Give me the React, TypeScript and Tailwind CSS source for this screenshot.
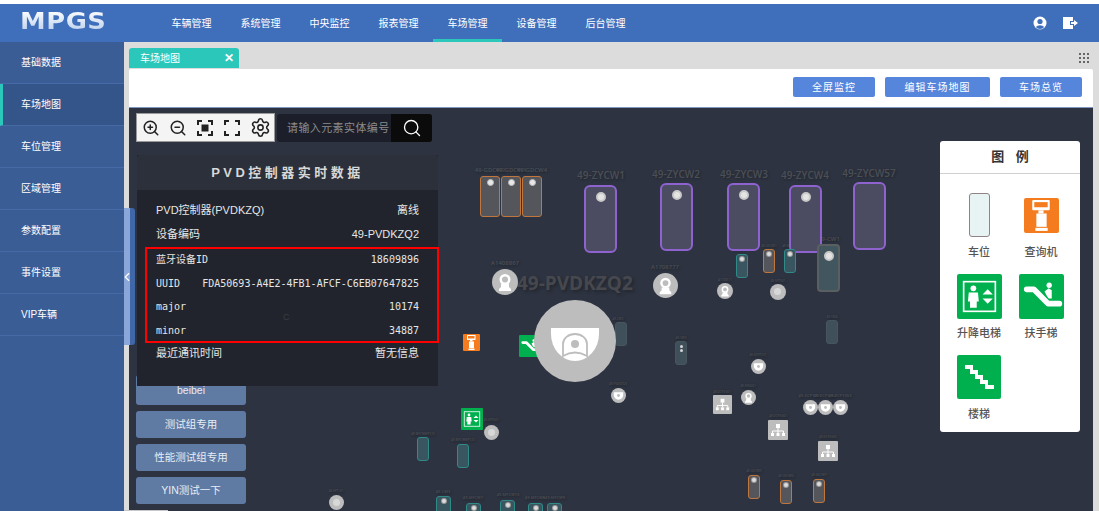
import { ChevronLeft, Search, Settings, ZoomIn, ZoomOut } from 'lucide-react';

const navItems = ['车辆管理', '系统管理', '中央监控', '报表管理', '车场管理', '设备管理', '后台管理'];
const sideItems = ['基础数据', '车场地图', '车位管理', '区域管理', '参数配置', '事件设置', 'VIP车辆'];
const groups = ['测试组专用', '性能测试组专用', 'YIN测试一下'];

// map canvas starts at page (129, 108), inside its 1px top border
const MX = 129;
const MY = 108;

type SlotKind = 'orange' | 'purple' | 'teal' | 'gray' | 'mixed';

const slotClass: Record<SlotKind, string> = {
    orange: 'border-[#c0763c] bg-[#55565c] rounded-[3px]',
    purple: 'border-2 border-[#8e63cf] bg-[#4b4c61] rounded-[6px]',
    teal: 'border-[#2f8a88] bg-[#39555f] rounded-[3px]',
    gray: 'border-[#47555f] bg-[#3f505a] rounded-[3px]',
    mixed: 'border-2 border-[#5a5f62] bg-[#42565f] rounded-[4px]',
};

const slots: { x: number; y: number; w: number; h: number; kind: SlotKind; dot?: 'big' | 'med' | 'small' | 'pair' }[] = [
    { x: 480, y: 176, w: 20, h: 41, kind: 'orange', dot: 'med' },
    { x: 501, y: 176, w: 20, h: 41, kind: 'orange', dot: 'med' },
    { x: 522, y: 176, w: 20, h: 41, kind: 'orange', dot: 'med' },
    { x: 584, y: 185, w: 33, h: 68, kind: 'purple', dot: 'big' },
    { x: 660, y: 183, w: 33, h: 68, kind: 'purple', dot: 'big' },
    { x: 727, y: 183, w: 33, h: 68, kind: 'purple', dot: 'big' },
    { x: 789, y: 185, w: 33, h: 68, kind: 'purple', dot: 'big' },
    { x: 853, y: 182, w: 33, h: 68, kind: 'purple' },
    { x: 736, y: 254, w: 12, h: 24, kind: 'teal', dot: 'small' },
    { x: 763, y: 249, w: 12, h: 24, kind: 'orange', dot: 'small' },
    { x: 784, y: 249, w: 12, h: 24, kind: 'teal', dot: 'small' },
    { x: 817, y: 244, w: 23, h: 48, kind: 'mixed', dot: 'big' },
    { x: 615, y: 322, w: 12, h: 24, kind: 'gray' },
    { x: 826, y: 320, w: 12, h: 24, kind: 'gray' },
    { x: 675, y: 341, w: 12, h: 24, kind: 'gray', dot: 'pair' },
    { x: 457, y: 444, w: 12, h: 24, kind: 'teal' },
    { x: 417, y: 437, w: 12, h: 24, kind: 'teal' },
    { x: 436, y: 496, w: 15, h: 24, kind: 'teal', dot: 'small' },
    { x: 466, y: 503, w: 15, h: 24, kind: 'teal', dot: 'small' },
    { x: 500, y: 500, w: 15, h: 24, kind: 'teal', dot: 'small' },
    { x: 528, y: 503, w: 15, h: 24, kind: 'teal', dot: 'small' },
    { x: 547, y: 503, w: 15, h: 24, kind: 'teal', dot: 'small' },
    { x: 748, y: 475, w: 12, h: 24, kind: 'orange', dot: 'small' },
    { x: 780, y: 480, w: 12, h: 24, kind: 'orange', dot: 'small' },
    { x: 813, y: 479, w: 12, h: 24, kind: 'orange', dot: 'small' },
];

const labels: { x: number; y: number; text: string; size: number }[] = [
    { x: 490, y: 170, text: '49-GDCW2', size: 6 },
    { x: 511, y: 170, text: '49-GDCW3', size: 6 },
    { x: 532, y: 170, text: '49-GDCW4', size: 6 },
    { x: 601, y: 175, text: '49-ZYCW1', size: 10 },
    { x: 676, y: 174, text: '49-ZYCW2', size: 10 },
    { x: 744, y: 174, text: '49-ZYCW3', size: 10 },
    { x: 805, y: 175, text: '49-ZYCW4', size: 10 },
    { x: 869, y: 173, text: '49-ZYCW57', size: 10 },
    { x: 505, y: 263, text: 'A1408867', size: 6 },
    { x: 665, y: 267, text: 'A1708777', size: 6 },
    { x: 829, y: 239, text: '49-CW1', size: 6 },
    { x: 742, y: 249, text: '49-GDCW1', size: 4 },
    { x: 769, y: 246, text: '49-GDCW1', size: 3 },
    { x: 790, y: 246, text: '49-MFCW2', size: 3 },
    { x: 725, y: 280, text: 'A1708111', size: 3 },
    { x: 778, y: 281, text: '49-SPT001', size: 3 },
    { x: 618, y: 319, text: '49-CW2', size: 3 },
    { x: 832, y: 317, text: '49-CW4', size: 3 },
    { x: 681, y: 338, text: '49-CW3', size: 3 },
    { x: 758, y: 355, text: '49-DCPT221', size: 3 },
    { x: 618, y: 384, text: '49-PVDKZQ3', size: 3 },
    { x: 748, y: 386, text: '49-SPG001', size: 3 },
    { x: 722, y: 392, text: '49-DCPSG01', size: 3 },
    { x: 810, y: 396, text: '49-DCPT001', size: 4 },
    { x: 825, y: 396, text: '49-DCPT002', size: 4 },
    { x: 840, y: 396, text: '49-DCPT003', size: 4 },
    { x: 778, y: 416, text: '49-DCPSG02', size: 3 },
    { x: 828, y: 437, text: '49-DCPSG03', size: 3 },
    { x: 491, y: 420, text: '49-SPT002', size: 3 },
    { x: 463, y: 440, text: '49-MFCWWP122', size: 3 },
    { x: 423, y: 434, text: '49-MFCWWP122', size: 3 },
    { x: 754, y: 471, text: '49-GDCW5', size: 3 },
    { x: 786, y: 476, text: '49-GDCW6', size: 3 },
    { x: 819, y: 475, text: '49-GDCW7', size: 3 },
    { x: 443, y: 492, text: '49-CW3', size: 4 },
    { x: 473, y: 498, text: '49-MFCW7', size: 4 },
    { x: 508, y: 495, text: '49-MFCW13', size: 4 },
    { x: 535, y: 498, text: '49-MFCW8', size: 4 },
    { x: 555, y: 498, text: '49-MFCW9', size: 4 },
    { x: 336, y: 491, text: '49-SPT101', size: 3 },
];

const circles: { x: number; y: number; r: number; icon: 'cam' | 'dome' | 'none' }[] = [
    { x: 505, y: 282, r: 13, icon: 'cam' },
    { x: 665, y: 285, r: 12.5, icon: 'cam' },
    { x: 725, y: 291, r: 8, icon: 'cam' },
    { x: 778, y: 292, r: 8, icon: 'none' },
    { x: 618, y: 395, r: 7.5, icon: 'dome' },
    { x: 758, y: 366, r: 7.5, icon: 'dome' },
    { x: 748, y: 397, r: 7.5, icon: 'cam' },
    { x: 810, y: 407, r: 7.5, icon: 'dome' },
    { x: 825, y: 407, r: 7.5, icon: 'dome' },
    { x: 840, y: 407, r: 7.5, icon: 'dome' },
    { x: 491, y: 432, r: 7.5, icon: 'none' },
    { x: 336, y: 502, r: 7.5, icon: 'none' },
];

const networks = [
    { x: 713, y: 395, s: 19 },
    { x: 768, y: 420, s: 20 },
    { x: 818, y: 441, s: 20 },
];

const rows = [
    { name: '蓝牙设备ID', value: '18609896' },
    { name: 'UUID', value: 'FDA50693-A4E2-4FB1-AFCF-C6EB07647825' },
    { name: 'major', value: '10174' },
    { name: 'minor', value: '34887' },
];

function KioskIcon({ size }: { size: number }) {
    return (
        <svg width={size} height={size} viewBox="0 0 34 34">
            <rect width="34" height="34" rx="2" fill="#f47b1e" />
            <rect x="8" y="2" width="17" height="10" rx="1" fill="#fff" />
            <rect x="10" y="4" width="13" height="5" fill="#f47b1e" />
            <rect x="14" y="12" width="5" height="3" fill="#fff" />
            <rect x="12" y="15" width="10" height="13" fill="#fff" />
            <rect x="11" y="29" width="12" height="3" fill="#fff" />
        </svg>
    );
}

function LiftIcon({ size }: { size: number }) {
    return (
        <svg width={size} height={size} viewBox="0 0 44 44">
            <rect width="44" height="44" rx="2" fill="#00b04f" />
            <rect x="6.500" y="7.500" width="31" height="29" fill="none" stroke="#fff" strokeWidth="1.600" />
            <circle cx="16" cy="14" r="2.800" fill="#fff" />
            <path d="M11.500 18h9l.8 9h-2v6h-6.600v-6h-2z" fill="#fff" />
            <path d="M25 20l5-5 5 5zM25 24h10l-5 5z" fill="#fff" />
        </svg>
    );
}

function EscalatorIcon({ size }: { size: number }) {
    return (
        <svg width={size} height={size} viewBox="0 0 44 44">
            <rect width="44" height="44" rx="2" fill="#00b04f" />
            <path d="M7.500 15h7l14 14h11" fill="none" stroke="#fff" strokeWidth="5.500" strokeLinecap="round" strokeLinejoin="round" />
            <circle cx="29.500" cy="11" r="2.600" fill="#fff" />
            <path d="M25 17l4-3 3 2v8l-3 0-2-3z" fill="#fff" />
        </svg>
    );
}

function StairsIcon({ size }: { size: number }) {
    return (
        <svg width={size} height={size} viewBox="0 0 44 44">
            <rect width="44" height="44" rx="2" fill="#00b04f" />
            <path d="M8 10h8v5h5v5h5v5h5v5h6v4H28v-5h-5v-5h-5v-5h-5v-5H8z" fill="#fff" />
        </svg>
    );
}

function CamGlyph() {
    return (
        <svg viewBox="0 0 26 26" className="h-full w-full">
            <circle cx="13" cy="10.500" r="5.500" fill="#fff" />
            <circle cx="13" cy="10.500" r="3" fill="#bdbdbd" />
            <path d="M9 15h8v3l2 2v2H7v-2l2-2z" fill="#fff" />
        </svg>
    );
}

function DomeGlyph() {
    return (
        <svg viewBox="0 0 16 16" className="h-full w-full">
            <path d="M3 4.500h10v3a5 5 0 0 1-10 0z" fill="#fff" />
            <circle cx="8" cy="8" r="1.500" fill="#bdbdbd" />
        </svg>
    );
}

function NetworkGlyph() {
    return (
        <svg viewBox="0 0 20 20" className="h-full w-full">
            <rect x="8" y="4" width="4" height="4" fill="#fff" />
            <path d="M10 8v3M4.500 13v-2h11v2M10 11v2" fill="none" stroke="#fff" strokeWidth="1" />
            <rect x="3" y="13" width="3" height="3" fill="#fff" />
            <rect x="8.500" y="13" width="3" height="3" fill="#fff" />
            <rect x="14" y="13" width="3" height="3" fill="#fff" />
        </svg>
    );
}

function ParkingMap() {
    return (
        <div className="absolute inset-0 overflow-hidden">
            {labels.map((l, i) => (
                <span
                    key={i}
                    className="absolute -translate-x-1/2 -translate-y-1/2 whitespace-nowrap font-['Open_Sans','Liberation_Sans',sans-serif] font-semibold text-[#4c4f56] [text-shadow:1px_1px_2px_#23272f]"
                    style={{ left: l.x - MX, top: l.y - MY, fontSize: l.size }}
                >
                    {l.text}
                </span>
            ))}

            <span className="absolute top-[162px] left-[388px] font-['Open_Sans','Liberation_Sans',sans-serif] text-[19px] leading-[26px] font-bold whitespace-nowrap text-[#46484e] [text-shadow:2px_2px_3px_#23272f]">
                49-PVDKZQ2
            </span>

            {slots.map((s, i) => (
                <div
                    key={i}
                    className={`absolute flex flex-col items-center border ${slotClass[s.kind]}`}
                    style={{ left: s.x - MX, top: s.y - MY, width: s.w, height: s.h }}
                >
                    {s.dot === 'big' && <div className="mt-[5px] h-[10px] w-[10px] rounded-full border-2 border-[#c9c9c9] bg-[#e4e4e4]" />}
                    {s.dot === 'med' && <div className="mt-[2px] h-[7px] w-[7px] rounded-full border border-[#bbb] bg-[#e8e8e8]" />}
                    {s.dot === 'small' && <div className="mt-[2px] h-[4px] w-[4px] rounded-full bg-[#dcdcdc] shadow-[0_0_0_1px_#9a9a9a]" />}
                    {s.dot === 'pair' && (
                        <div className="mt-[3px] flex flex-col gap-[1px]">
                            <div className="h-[3px] w-[3px] rounded-full bg-[#d5d5d5]" />
                            <div className="h-[3px] w-[3px] rounded-full bg-[#d5d5d5]" />
                        </div>
                    )}
                </div>
            ))}

            {circles.map((c, i) => (
                <div
                    key={i}
                    className="absolute rounded-full bg-[#bdbdbd]"
                    style={{ left: c.x - c.r - MX, top: c.y - c.r - MY, width: c.r * 2, height: c.r * 2 }}
                >
                    {c.icon === 'cam' && <CamGlyph />}
                    {c.icon === 'dome' && <DomeGlyph />}
                    {c.icon === 'none' && <div className="m-[4px] h-[7px] w-[7px] rounded-full bg-[#d8d8d8]" />}
                </div>
            ))}

            {networks.map((n, i) => (
                <div
                    key={i}
                    className="absolute rounded-[1px] bg-[#bdbdbd]"
                    style={{ left: n.x - MX, top: n.y - MY, width: n.s, height: n.s }}
                >
                    <NetworkGlyph />
                </div>
            ))}

            <div className="absolute top-[226px] left-[334px]">
                <KioskIcon size={17} />
            </div>
            <div className="absolute top-[227px] left-[390px]">
                <EscalatorIcon size={22} />
            </div>
            <div className="absolute top-[300px] left-[332px]">
                <LiftIcon size={22} />
            </div>

            {/* selected element */}
            <div className="absolute top-[192px] left-[405px] h-[82px] w-[82px] rounded-full bg-[#bdbdbd]">
                <svg viewBox="0 0 82 82" className="h-full w-full">
                    <path d="M17 28h48v6a24 27 0 0 1-48 0z" fill="#fff" />
                    <path d="M29 56V44a12 10 0 0 1 24 0v12q-12-7-24 0z" fill="none" stroke="#bdbdbd" strokeWidth="1.800" />
                    <circle cx="41" cy="44" r="4" fill="#bdbdbd" />
                </svg>
            </div>
        </div>
    );
}

function DevicePanel() {
    return (
        <div className="absolute top-[47px] left-[8px] h-[231px] w-[301px] bg-[#21242c] text-[#e6e6e6]">
            <div className="flex h-[35px] items-center justify-center rounded-t-[3px] bg-[#2b303a] text-[13px] font-bold tracking-[3.500px] text-[#d8d8d8]">
                PVD控制器实时数据
            </div>
            <div className="flex flex-col px-[19px] pt-[8px] text-[11px]">
                <div className="flex h-[24px] items-center justify-between">
                    <span>PVD控制器(PVDKZQ)</span>
                    <span>离线</span>
                </div>
                <div className="flex h-[24px] items-center justify-between">
                    <span>设备编码</span>
                    <span>49-PVDKZQ2</span>
                </div>
                <div className="mt-[2px] flex flex-col font-['DejaVu_Sans_Mono','Noto_Sans_CJK_SC',monospace] text-[10px]">
                    {rows.map((r) => (
                        <div key={r.name} className="flex h-[23.500px] items-center justify-between">
                            <span>{r.name}</span>
                            <span>{r.value}</span>
                        </div>
                    ))}
                </div>
                <div className="flex h-[23px] items-center justify-between">
                    <span>最近通讯时间</span>
                    <span>暂无信息</span>
                </div>
            </div>
            <span className="absolute top-[156px] left-[146px] text-[9px] text-[#3a3d45]">C</span>
            {/* highlight */}
            <div className="absolute top-[92px] left-[8px] h-[96px] w-[294px] border-2 border-[#ff0000]" />
        </div>
    );
}

function Legend() {
    const items = [
        { name: '车位', icon: <div className="h-[44px] w-[21px] rounded-[3px] border border-[#8f8385] bg-[#e8f4f4]" /> },
        { name: '查询机', icon: <KioskIcon size={35} /> },
        { name: '升降电梯', icon: <LiftIcon size={45} /> },
        { name: '扶手梯', icon: <EscalatorIcon size={45} /> },
        { name: '楼梯', icon: <StairsIcon size={44} /> },
    ];
    return (
        <div className="absolute top-[33px] left-[811px] h-[291px] w-[140px] rounded-[3px] bg-white">
            <div className="flex h-[33px] items-center justify-center border-b border-[#cfcfcf] text-[13px] font-bold text-[#333] [word-spacing:8px]">
                图 例
            </div>
            <div className="grid grid-cols-2 px-[8px] pt-[15px]">
                {items.map((item) => (
                    <div key={item.name} className="flex h-[81px] flex-col items-center">
                        <div className="flex h-[52px] items-center justify-center">{item.icon}</div>
                        <div className="flex h-[22px] items-center text-[11px] font-medium text-[#555]">{item.name}</div>
                    </div>
                ))}
            </div>
        </div>
    );
}

export default function App() {
    return (
        <div className="flex h-[511px] w-[1099px] flex-col overflow-hidden bg-white pt-[4px] font-['Liberation_Sans','Noto_Sans_CJK_SC',sans-serif]">
            {/* top bar */}
            <header className="flex h-[38px] shrink-0 items-center bg-[#3f6fbb] text-white">
                <div className="w-[157px] pl-[20px]">
                    <span className="inline-block origin-left scale-x-[1.12] bg-gradient-to-b from-white to-[#b9cdea] bg-clip-text font-['DejaVu_Sans',sans-serif] text-[23px] leading-none font-bold tracking-[0.500px] text-transparent">
                        MPGS
                    </span>
                </div>
                <nav className="flex h-full">
                    {navItems.map((item) => (
                        <div
                            key={item}
                            className={
                                item === '车场管理'
                                    ? 'flex h-full w-[69px] items-center justify-center border-b-[3px] border-[#2cc7bb] pt-[3px] text-[10px]'
                                    : 'flex h-full w-[69px] items-center justify-center text-[10px]'
                            }
                        >
                            {item}
                        </div>
                    ))}
                </nav>
                <div className="ml-auto flex items-center gap-[16px] pr-[21px]">
                    <svg width="14" height="14" viewBox="0 0 14 14">
                        <circle cx="7" cy="7" r="6.500" fill="#fff" />
                        <circle cx="7" cy="5.500" r="2.600" fill="#3f6fbb" />
                        <path d="M2.800 11a5 4 0 0 1 8.400 0 5.500 5.500 0 0 1-8.400 0z" fill="#3f6fbb" />
                    </svg>
                    <svg width="15" height="12" viewBox="0 0 15 12">
                        <path d="M0 0h10v4H7v4h3v4H0z" fill="#fff" />
                        <path d="M8 5h3V3l4 3-4 3V7H8z" fill="#fff" />
                    </svg>
                </div>
            </header>

            <div className="flex min-h-0 flex-1">
                {/* side menu */}
                <aside className="flex w-[124px] shrink-0 flex-col bg-[#3a5d96] text-[10px] text-white">
                    {sideItems.map((item, i) => (
                        <div
                            key={item}
                            className={
                                i === 1
                                    ? 'flex h-[42px] items-center border-b border-[#456aa5] border-l-[3px] border-l-[#2cc7bb] bg-[#34558a] pl-[18px]'
                                    : 'flex h-[42px] items-center border-b border-[#456aa5] pl-[21px]'
                            }
                        >
                            {item}
                        </div>
                    ))}
                </aside>

                {/* content */}
                <main className="relative flex min-w-0 flex-1 flex-col bg-[#dcdcdc] pr-[6px] pl-[5px]">
                    <div className="flex h-[27px] shrink-0 items-end justify-between pb-px">
                        <div className="flex h-[20px] w-[110px] items-center justify-between rounded-t-[3px] bg-[#2cc7bb] pr-[5px] pl-[11px] text-[10px] text-white">
                            <span>车场地图</span>
                            <span className="text-[12px] leading-none font-bold">✕</span>
                        </div>
                        <div className="mr-[4px] mb-[5px] grid grid-cols-3 gap-[2px]">
                            {[0, 1, 2, 3, 4, 5, 6, 7, 8].map((n) => (
                                <div key={n} className="h-[2px] w-[2px] bg-[#666]" />
                            ))}
                        </div>
                    </div>

                    <div className="flex h-[38px] shrink-0 items-center justify-end gap-[10px] rounded-t-[2px] bg-white pr-[11px] pb-[2px]">
                        <button className="h-[20px] w-[82px] rounded-[2px] bg-[#5686dc] text-[10px] tracking-[1px] text-white">全屏监控</button>
                        <button className="h-[20px] w-[105px] rounded-[2px] bg-[#5686dc] text-[10px] tracking-[1px] text-white">编辑车场地图</button>
                        <button className="h-[20px] w-[82px] rounded-[2px] bg-[#5686dc] text-[10px] tracking-[1px] text-white">车场总览</button>
                    </div>

                    <div className="relative min-h-0 flex-1 border-t border-[#7d97c0] bg-[#2d3340]">
                        <ParkingMap />

                        {/* tool bar */}
                        <div className="absolute top-[5px] left-[7px] flex h-[29px] items-center gap-[9px] border border-[#9a9a9a] bg-[#f4f4f4] pr-[3px] pl-[5px] text-[#222]">
                            <ZoomIn size={18} strokeWidth={2} />
                            <ZoomOut size={18} strokeWidth={2} />
                            <svg width="18" height="18" viewBox="0 0 18 18" fill="none" stroke="#222" strokeWidth="2">
                                <path d="M2 6V2h4M12 2h4v4M16 12v4h-4M6 16H2v-4" />
                                <rect x="5.500" y="5.500" width="7" height="7" fill="#222" stroke="none" />
                            </svg>
                            <svg width="18" height="18" viewBox="0 0 18 18" fill="none" stroke="#222" strokeWidth="2">
                                <path d="M2 6V2h4M12 2h4v4M16 12v4h-4M6 16H2v-4" />
                            </svg>
                            <Settings size={21} strokeWidth={1.800} />
                        </div>
                        <div className="absolute top-[6px] left-[148px] flex h-[28px] w-[155px] overflow-hidden rounded-[3px] bg-[#1c1f2a]">
                            <div className="flex flex-1 items-center pl-[10px] text-[11px] tracking-[0.400px] whitespace-nowrap text-[#8c8c8c]">请输入元素实体编号</div>
                            <div className="flex w-[41px] items-center justify-center bg-[#0b0b0b] text-white">
                                <Search size={20} strokeWidth={1.600} />
                            </div>
                        </div>

                        {/* group list under the panel */}
                        <div className="absolute top-[267px] left-[7px] flex w-[110px] flex-col gap-[6px] text-[10.500px] text-[#e8edf5]">
                            <div className="flex h-[30px] items-end justify-center rounded-[3px] bg-[#5f7aa3] pb-[9px] leading-[12px]">beibei</div>
                            {groups.map((g) => (
                                <div key={g} className="flex h-[27px] items-center justify-center rounded-[3px] bg-[#5f7aa3]">
                                    {g}
                                </div>
                            ))}
                        </div>

                        <DevicePanel />
                        <Legend />
                    </div>

                    {/* collapse handle */}
                    <div className="absolute top-[166px] left-0 flex h-[137px] w-[11px] text-white">
                        <div className="flex w-[6px] items-center justify-center overflow-visible bg-[#8ba6d9]">
                            <ChevronLeft size={14} strokeWidth={2} className="shrink-0" />
                        </div>
                        <div className="w-[5px] rounded-r-[3px] bg-[#4067a8]" />
                    </div>
                    <div className="absolute bottom-0 left-0 h-px w-[44px] bg-[#c8c8c8]" />
                </main>
            </div>
        </div>
    );
}
